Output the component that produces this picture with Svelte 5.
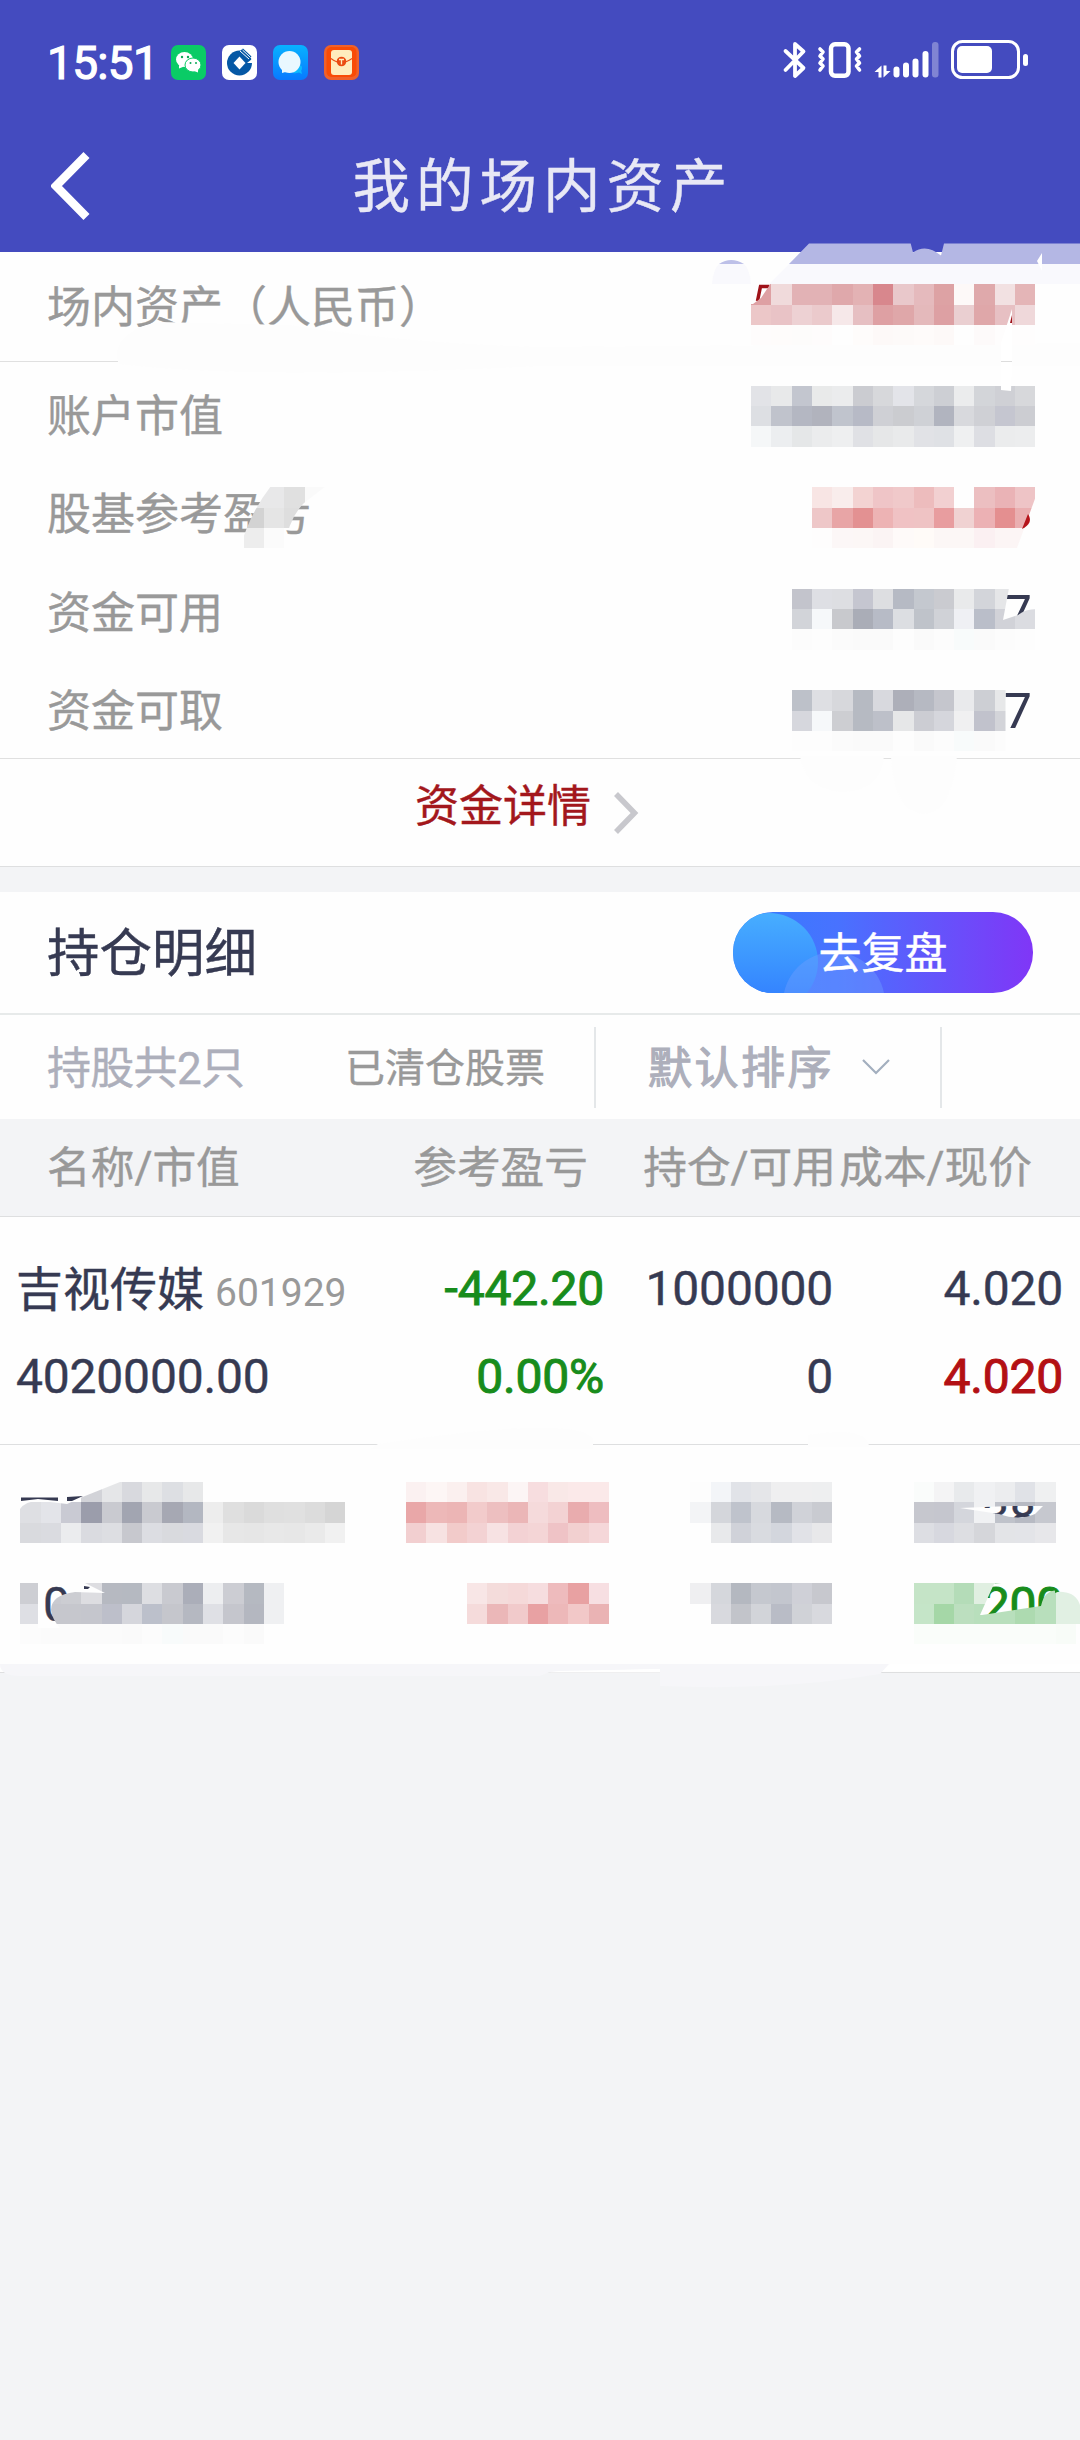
<script>
  const funds = [
    { label: '账户市值', value: '' },
    { label: '股基参考盈亏', value: '' },
    { label: '资金可用', value: '7' },
    { label: '资金可取', value: '7' }
  ];

  // Privacy mosaic: blocks sit on a square grid, one colour per cell.
  const cell = 20.3;
  const blocks = [
    { col: 37, row: 14, lines: [
      'dea0a3 f0dadb e2b2b5 e2b2b5 dfa8ab e3b2b4 d8878d e9c8cb e5babd dda2a4 fdf9f8 dfa9ab f2e1e2 e4b5b7',
      'ecc7c8 e9c3c6 edd1d3 ebcacc f6e8e9 e6bfc2 dea0a3 dfa7a9 e4b9bb dda0a3 eacfd1 dfa7a9 e7c0c3 efd8da',
      'fefcfc fefcfb fdfcfb fefcfc fefefe fefcfb fdf9f8 fdfaf9 fefbfa fdf9f8 fefefe fdfafa fefdfd fefdfd'] },
    { col: 37, row: 19, lines: [
      'e2e3e7 e8e9ea c3c6cf e9eaea ebeced cbccd1 d7d8db e3e4e9 d5d7db cdcfd4 ebeced d3d5d9 cfd0d5 d7d8db',
      'dddfe3 c0c3cc b4b7c2 b1b3bd c0c4cd b7bac6 cfd0d5 cbccd0 cfd1d6 b1b4bf d8d9dd cfd0d5 c5c6d0 cccdd2',
      'f5f7f8 eceef0 e5e7e8 ebeced eeeff0 e0e1e5 e6e7e8 e9eaeb e1e2e6 dfe1e5 eff0f1 dddee3 ebeced ecedee'] },
    { col: 40, row: 24, lines: [
      'f8e5e4 f9edec f3d3d2 efc5c7 f0c9ca edbcbd f2d0d1 fefefe ecbfc1 eab3b6 eec4c6',
      'eec7c8 e8a5a6 e39192 edb3b4 f0c2c4 efc3c4 e89d9f f0d2d2 ecb1b4 e48f90 eaafb1',
      'fefdfd fcf7f7 fcf7f6 fbf4f4 fefaf9 fffbf8 fcf7f6 fcf7f6 fbf0f2 fcf5f5 fcf5f5'] },
    { col: 39, row: 29, lines: [
      'c3c4cc dedfe4 dddee2 c5c6d0 dddee1 b6bac4 c4c8cf cacbd0 e9eaeb d3d5da e5e6e8 fefefe',
      'd2d4d9 f6f8fa c8c9cd aaadb7 b7bbc6 dcdee2 bfc3ca d0d2d7 eff0f4 babec9 d1d2d8 dbdce1',
      'fcfcfc fdfdfd fbfbfb fafafa fafafa fdfdfd fafafa fcfcfc f8fbfb fafafa fcfcfc fdfdfd'] },
    { col: 39, row: 34, lines: [
      'bdc1c9 dedfe3 d7d8dc b6bac2 d8d9de adafb9 b6b9c2 c5c6cd e9eaec cdcfd4 e7e8e9',
      'd6d7dd f6f8fa cdced2 b6bac2 bdc0c9 e6e7e8 cccdd3 d5d6dc f0f0f1 c1c2cc d3d4d9',
      'fdfdfd fdfdfd fbfbfb fafafa fafafa fdfdfd fafafa fcfcfc f8fbfb fafafa fcfcfc'] },
    { col: 1, row: 73, lines: [
      '- - - d2d3d8 e5e6e8 d8d9de e7e8e9 dddfe3 e7e8e9',
      'dedfe3 e3e4e9 c9cad3 9b9dab c9cad0 a2a5b1 c9cad0 a6a8b3 b3b7c1 ededed dfdfdf dadada dfdfdf e0e0e0 dcdcdc d5d5d5',
      'd9dade dadbe0 ebecee dadbe0 dddee2 c7c8ce dcdde2 d9dade d9dae0 f1f1f1 e7e7e7 e6e6e6 e8e8e8 e7e7e7 eaeaea f1f1f1'] },
    { col: 1, row: 78, lines: [
      'cdced3 c9cad0 cccdd2 dddde1 b6b9c1 b5b9c1 dddee2 c9cad0 abaeb9 edeef0 cccdd3 b5b9c1 eff0f2',
      'dedfe4 c6c7cd c6c7cd c5c6cd bdbfca d5d6dc bcc0cb c5c6cc b5b8c1 dfe0e5 c5c6cd b4b7c0 eff0f2',
      'fcfcfc fbfbfb fbfbfb fbfbfb fbfbfb fafafa fcfcfc f8fbfb fafafa fafafa fcfcfc fafafa'] },
    { col: 20, row: 73, lines: [
      'fbf1f1 fdf6f5 fbf0ef f8e3e2 f9e8e7 fcf5f5 f7dddf f9e8e7 fbe9e9 fbe9e9',
      'e9a7a8 edb8b8 ecb5b5 f2cbcb edbfc0 ebb6b7 f5dadb f3d2d3 e9acae eebdc0',
      'f2cfd0 f7e2e2 f2cbca f3d2d3 f7e2e3 f3d2d4 f4d5d6 efc3c6 f2d0d0 f5d7d9'] },
    { col: 23, row: 78, lines: [
      'f8e6e6 f4dcdb f5d9d9 f6dddf eebbbd e8a1a2 f7dfe2',
      'f5dbdb ebb7b8 f1cacb e8a1a3 edb8b9 f2c8c8 eab3b4'] },
    { col: 34, row: 73, lines: [
      'fdfdfd f3f5f8 e1e3e8 e5e6e9 efeff0 efeff0 eeeff0',
      'f3f4f6 d4d6db bfc3cc d7d9de b6bac3 d0d2d8 c9cbd1',
      'fefefe e8e9eb d0d2d9 d9dbe0 d3d6dd e1e2e7 e8e8ea'] },
    { col: 34, row: 78, lines: [
      'efeff1 d5d7dc b4b8c0 c5c8cf c3c6ce cfd0d7 c7c8ce',
      'fefefe d8d9de c2c4ca d2d4d9 b9bcc6 d0d2d7 d8d9de'] },
    { col: 45, row: 73, lines: [
      'fafcfb f4f4f5 e8eaec f0f1f3 ecedef e0e2e7 eff0f1',
      'c6c7ce c5c6ce d4d6dc f0f1f3 bfc2ca b7bac3 c6c8cf',
      'dddee3 d7d8df dddee2 d5d6da e3e4e7 e3e4e8 e7e7ea'] },
    { col: 45, row: 78, lines: [
      'c5e4c7 c5e4c7 b4dcb8 e0efe1 addab3 b8dfbc b8dfbc e1f0e3 e1f0e3',
      'c5e5c8 a5d7a7 bcdfbf b8dfbc b8dfbc addab0 b8dfbc e1f0e3 e1f0e3',
      'fafdfa fafdfa fafdfa fafdfa fafdfa fafdfa fafdfa f8fcf8'] },
    { col: 12, row: 24, lines: ['e8e8e9 e8e8e9 e0e0e0 fafafa', 'd3d3d3 e5e5e5 dedede', 'ededed fbfbfb'] }
  ];

  const tiles = blocks.flatMap(({ col, row, lines }) =>
    lines.flatMap((line, j) =>
      line.split(' ').map((fill, i) => ({ x: (col + i) * cell, y: (row + j) * cell, fill }))
        .filter((t) => t.fill !== '-')
        .map((t) => ({ ...t, fill: '#' + t.fill }))
    )
  );
  // Signal strength bars: x and top of each.
  const bars = [[113.5, 27.5], [123, 23.5], [132.5, 19.5], [142.5, 12]];
</script>

<div class="screen">
  <header>
    <div class="status">
      <span class="time">15:51</span>
      <div class="apps">
        <svg viewBox="0 0 35 35"><rect width="35" height="35" rx="7" fill="#0acb66" /><ellipse cx="13.500" cy="14.500" rx="8.500" ry="7.500" fill="#fff" /><path d="M8 20v3.500l5-2z" fill="#fff" /><ellipse cx="22" cy="20" rx="8" ry="7" fill="#fff" stroke="#0acb66" stroke-width="1" /><path d="M23 26l4 1.500v-4z" fill="#fff" /><g fill="#0aa956"><circle cx="11" cy="12" r="1.200" /><circle cx="17" cy="12" r="1.200" /><circle cx="19.500" cy="18" r="1" /><circle cx="25" cy="18" r="1" /></g></svg>
        <svg viewBox="0 0 35 35"><rect width="35" height="35" rx="7" fill="#fff" /><circle cx="17.500" cy="18" r="12.500" fill="#0558a5" /><path d="M17.500 11.500l6 6.500-6 6.500-6-6.500z" fill="#fff" /><path d="M25 18l10-8v8z" fill="#fff" /><path d="M18 6l3-2.500 8.500 8-5 4.500z" fill="#0558a5" /><path d="M18 6l9 8M20.500 5l8 7.500" stroke="#fff" stroke-width="1" /></svg>
        <svg viewBox="0 0 35 35"><defs><linearGradient id="sky" x2="0" y2="1"><stop stop-color="#08b2ff" /><stop offset="1" stop-color="#0879ff" /></linearGradient></defs><rect width="35" height="35" rx="7" fill="url(#sky)" /><path d="M20 28c6 1 9-2 9-5s-2-3-4-3z M25 27l4 2-1-4z" fill="#0cb8ff" /><circle cx="16.500" cy="17" r="11" fill="#e9f8ff" /><path d="M9 23v5l7-2z" fill="#e9f8ff" /></svg>
        <svg viewBox="0 0 35 35"><rect width="35" height="35" rx="7" fill="#f0612a" /><rect x="2.500" y="2" width="30" height="30" rx="5" fill="#f94b06" /><rect x="7" y="5" width="21" height="25" rx="3" fill="#ffecbd" /><path d="M7 13.500q10 8 21 0" fill="none" stroke="#e94d15" stroke-width="1.200" /><circle cx="17.500" cy="16.500" r="4.800" fill="#eb4b12" /><path d="M15 14.500h5M17.500 14.500v5" stroke="#ffecbd" stroke-width="1.300" /></svg>
      </div>
      <svg class="system" viewBox="0 0 250 42">
        <g fill="none" stroke="#fff" stroke-linejoin="round" stroke-linecap="round">
          <path d="M5.500 12l18 17-8.500 8V5l8.500 7.500L5.500 31" stroke-width="3.800" />
          <rect x="51" y="5.300" width="17.500" height="31.500" rx="4" stroke-width="4.500" />
          <path d="M40 10l3 3-3 4 3 3-3 4 3 3-3 4M79.500 10l-3 3 3 4-3 3 3 4-3 3 3 4" stroke-width="3.600" />
          <rect x="172.500" y="2.500" width="66" height="36" rx="10" stroke-width="3" />
        </g>
        <path d="M101.500 38.500h-3V33h-4l7-6.500zM103.500 26.500h3V32h4l-7 6.500z" fill="#fff" />
        {#each bars as [x, y]}
          <rect {x} {y} width="6" height={38.5 - y} rx="3" fill="#fff" />
        {/each}
        <rect x="152" y="3" width="6.500" height="35.500" rx="3" fill="#fff" opacity=".32" />
        <rect x="177" y="7" width="35" height="27" rx="5" fill="#fff" />
        <rect x="243" y="15" width="5" height="12" rx="2.500" fill="#fff" />
      </svg>
    </div>
    <div class="nav">
      <svg class="back" viewBox="0 0 40 68"><path d="M35.500 3L5 34l30.500 31" fill="none" stroke="#fff" stroke-width="8.500" /></svg>
      <h1>我的场内资产</h1>
    </div>
  </header>

  <section class="funds">
    <div class="total"><span>场内资产（人民币）</span></div>
    <div class="list">
      {#each funds as fund}
        <div class="fund"><span>{fund.label}</span><b>{fund.value}</b></div>
      {/each}
    </div>
    <div class="detail">
      <span>资金详情</span>
      <svg viewBox="0 0 26 42"><path d="M3 2l18.500 19L3 40" fill="none" stroke="#c8c8cd" stroke-width="5.500" /></svg>
    </div>
  </section>

  <section class="positions">
    <div class="heading">
      <h2>持仓明细</h2>
      <button>
        <svg viewBox="0 0 300 81">
          <defs>
            <linearGradient id="pill"><stop stop-color="#347dfd" /><stop offset=".35" stop-color="#4872ff" /><stop offset="1" stop-color="#8036f7" /></linearGradient>
            <linearGradient id="bubble" x2="0" y2="1"><stop stop-color="#47aeff" /><stop offset="1" stop-color="#307bff" /></linearGradient>
            <clipPath id="round"><rect width="300" height="81" rx="40" /></clipPath>
          </defs>
          <g clip-path="url(#round)">
            <rect width="300" height="81" fill="url(#pill)" />
            <circle cx="36" cy="50" r="49" fill="url(#bubble)" />
            <circle cx="101" cy="91" r="51" fill="#70a0ff" opacity=".42" />
          </g>
        </svg>
        <span>去复盘</span>
      </button>
    </div>
    <div class="filters">
      <span class="count">持股共2只</span>
      <span class="cleared">已清仓股票</span>
      <div class="sort">
        <span>默认排序</span>
        <svg viewBox="0 0 28 16"><path d="M1 1l13 13L27 1" fill="none" stroke="#a3afbf" stroke-width="2.200" /></svg>
      </div>
    </div>
    <div class="columns">
      <span>名称/市值</span><span>参考盈亏</span><span>持仓/可用</span><span>成本/现价</span>
    </div>
    <div class="stock">
      <div class="line">
        <span class="name">吉视传媒<small>601929</small></span>
        <span class="green">-442.20</span><span>1000000</span><span>4.020</span>
      </div>
      <div class="line">
        <span>4020000.00</span><span class="green">0.00%</span><span>0</span><span class="red">4.020</span>
      </div>
    </div>
    <div class="stock">
      <div class="line"><span></span><span></span><span></span><span class="inner">38</span></div>
      <div class="line"><span class="shift">0</span><span></span><span></span><span class="green">200</span></div>
    </div>
  </section>

  <!-- Brush strokes of the privacy mosaic, laid over the page -->
  <svg class="mosaic" viewBox="0 0 1080 2440">
    <defs>
      <mask id="gaps" maskUnits="userSpaceOnUse" x="0" y="0" width="1080" height="2440">
        <rect width="1080" height="2440" fill="#fff" />
        <g fill="#000">
          <path d="M750 283h21l-10 15-8 6h-3zM1036 496l-19 52h19z" />
          <path d="M1009 588h28v21q-12 0-19 6l-15 5z" />
          <path d="M1005.500 689h16v62h-16z" />
          <path d="M960 1508l50-2h33l-8 8q-16 7-36 0z" />
          <path d="M980 1615l14-31 21-3h45v10q-15-3-19 15l-59 9z" />
          <path d="M1055 1581h26v28q-3-16-18-17-4-1-8 1z" />
          <path d="M38 1583h47l20 10-30-1q-24 3-24 18 1 9 9 18H38z" />
          <path d="M18 1480h107l-45 18-13 6-25-3q-16-1-22 8z" />
          <path d="M235 486h36q-21 27-31 62h-5zM326 486l-22 17q-16 16-19 45h45v-62z" />
        </g>
      </mask>
    </defs>
    <g fill="#fdfdfd">
      <path d="M119 364C110 345 130 326 160 322L290 325Q400 343 540 347L1080 343V366H540Q250 380 119 364z" />
      <path d="M800 756h84q-5 36-43 36-35-3-41-36zM891 756h66q-6 58-34 58-29-3-32-58z" />
      <path d="M378 1444q200-30 215-5v10H370zM808 1435q60-10 61 12h-61z" />
    </g>
    <path d="M0 1664H889l-9 10q-100 17-220 12V1669l-110 3-10 4H20Q0 1676 0 1664z" fill="#f6f6f9" />
    <path d="M559 1671l101-2v3.500H547z" fill="#fff" />
    <path d="M883 1671l8-7h189v8z" fill="#fff" />

    <path d="M809 243.600H910.700L913 252.500Q926 243 941 255.500L944 243.600H1080V264H789z" fill="#b4b7e4" />
    <path d="M789 264h291v20H769z" fill="#f9f9fd" />
    <path d="M719 264q12-8 25 0z" fill="#bdc0e8" />
    <path d="M712 284q1-14 7-20h25q6 6 7 20z" fill="#f9f9fd" />
    <path d="M1042 253v18l-5-10z" fill="#fff" />

    <path d="M757.500 301l3-14.500h9" fill="none" stroke="#9f1118" stroke-width="3.500" />
    <g mask="url(#gaps)" shape-rendering="crispEdges">
      {#each tiles as tile}
        <rect x={tile.x} y={tile.y} width={cell} height={cell} fill={tile.fill} />
      {/each}
    </g>
    <path d="M1012 309l-11 34v47l10 1 1-28z" fill="#fff" />
    <path d="M1001 361.500h11" stroke="#ddd" />
    <path d="M1010 323l2-8v8z" fill="#9f1118" />
    <path d="M1028 514q6 9-6 15z" fill="#b5141b" />
    <path d="M21 1497.500h37v3.500l-20-2-17 2zM67 1497l16-1-11 5h-5zM84 1586l6 1-2 2h-4z" fill="#363a52" />
  </svg>
</div>

<style>
  :global(body) { background: #f3f4f6; }
  .screen {
    position: relative; width: 1080px; height: 2440px; overflow: hidden; background: #f3f4f6;
    color: #363a52; font-family: Roboto, "Noto Sans CJK SC", sans-serif; font-size: 44px; line-height: 1;
    -webkit-text-stroke: .4px currentColor;
  }
  header { height: 252px; background: #444bbf; color: #fff; }
  .status { display: flex; align-items: center; height: 122px; padding: 0 50px 0 47px; }
  .time { width: 124px; padding-top: 3px; font-size: 46px; font-weight: 400; letter-spacing: -0.7px; -webkit-text-stroke: 1.2px currentColor; }
  .apps { display: flex; gap: 16px; padding-top: 2px; }
  .apps svg { width: 35px; height: 35px; }
  .system { width: 250px; height: 42px; margin-left: auto; margin-bottom: 2px; }
  .nav { display: grid; grid-template-columns: 40px 1fr 40px; align-items: center; height: 130px; padding: 0 51px; }
  .back { width: 40px; height: 68px; margin-bottom: 2px; }
  h1 { margin: 0; padding: 2px 0 0 6px; color: #e8e8f5; font-size: 57.5px; font-weight: 400; letter-spacing: 6px; text-align: center; }
  .funds { background: #fefefe; color: #999; border-bottom: 1px solid #dedfe0; }
  .total { display: flex; align-items: center; height: 110px; padding: 3px 48px 0 47px; border-bottom: 1px solid #e0e0e0; box-sizing: border-box; }
  .list { display: flex; flex-direction: column; padding: 3px 48px 0 47px; height: 397px; box-sizing: border-box; border-bottom: 1px solid #e0e0e0; }
  .fund { display: flex; align-items: center; justify-content: space-between; height: 99px; }
  .fund span { padding-top: 6px; }
  .fund b { color: #363a52; font-family: "Noto Sans", sans-serif; font-size: 50px; font-weight: 400; -webkit-text-stroke: 0; }
  .detail { display: flex; justify-content: center; gap: 22px; height: 107px; padding: 26px 26px 0 0; box-sizing: border-box; color: #a3171c; }
  .detail svg { width: 26px; height: 42px; margin-top: 7px; }
  .positions { margin-top: 25px; background: #fefefe; }
  .heading { display: flex; align-items: center; justify-content: space-between; height: 123px; padding: 0 47px; box-sizing: border-box; border-bottom: 2px solid #e7eaea; }
  h2 { margin: 0; padding-top: 4px; font-size: 52.5px; font-weight: 400; }
  button { display: grid; place-items: center; width: 300px; height: 81px; padding: 0; border: 0; background: none; color: #fff; font: inherit; font-size: 43px; }
  button > * { grid-area: 1 / 1; }
  button span { z-index: 1; padding-top: 3px; }
  .filters { display: flex; align-items: center; height: 104px; padding-left: 47px; }
  .filters span { padding-top: 4px; }
  .count { width: 298px; color: #adafbb; letter-spacing: -0.7px; }
  .cleared { width: 249px; color: #999; font-size: 40px; }
  .sort { display: flex; align-items: center; gap: 28px; width: 348px; height: 81px; padding-left: 52px; box-sizing: border-box; border: solid #e4e7e9; border-width: 0 2px; color: #adafbb; letter-spacing: 2.5px; -webkit-text-stroke: 1.2px currentColor; }
  .sort svg { width: 28px; height: 16px; }
  .columns { display: grid; grid-template-columns: 300px 241px 248px 196px; align-items: center; height: 98px; padding: 3px 0 0 47px; box-sizing: border-box; border-bottom: 1px solid #dedfe0; background: #f3f4f6; color: #999; font-size: 43.7px; white-space: nowrap; }
  .columns span + span { text-align: right; }
  .stock { height: 228px; padding-top: 28px; box-sizing: border-box; border-bottom: 1px solid #dedfe0; }
  .line { display: grid; grid-template-columns: 370px 218px 229px 230px; align-items: center; height: 88px; padding-left: 16px; font-size: 48px; letter-spacing: -0.2px; white-space: nowrap; }
  .line span + span { text-align: right; }
  .name { font-size: 47px; letter-spacing: 0; }
  small { margin-left: 11px; color: #999; font-size: 39px; -webkit-text-stroke: 0; }
  .green { color: #188c1c; -webkit-text-stroke: 1px currentColor; }
  .red { color: #b31014; -webkit-text-stroke: 1px currentColor; }
  .shift { padding-left: 27px; }
  .inner { padding-right: 27px; }
  .mosaic { position: absolute; inset: 0; width: 1080px; height: 2440px; pointer-events: none; }
</style>
